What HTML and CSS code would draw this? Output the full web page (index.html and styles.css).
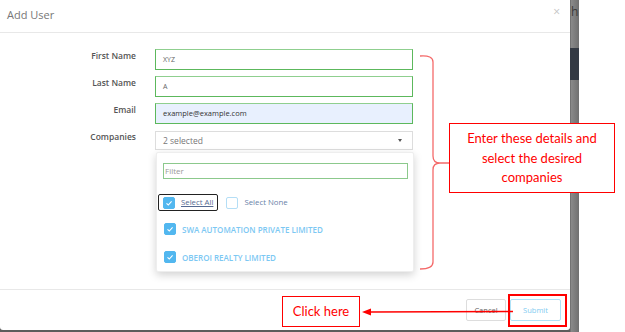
FILE: index.html
```html
<!DOCTYPE html>
<html>
<head>
    <meta charset="UTF-8">
    <title>Add User</title>
    <link rel="stylesheet" href="styles.css">
</head>
<body>
    <div class="page">
        <div class="backdrop">
            <div class="strip-text">h</div>
            <div class="strip-block"></div>
            <div class="modal">
                <div class="modal-header">
                    <span class="modal-title">Add User</span>
                    <span class="close">&times;</span>
                </div>
                <div class="modal-body">
                    <form class="user-form">
                        <label>First Name</label>
                        <div class="field valid">XYZ</div>
                        <label>Last Name</label>
                        <div class="field valid">A</div>
                        <label>Email</label>
                        <div class="field valid autofill">example@example.com</div>
                        <label>Companies</label>
                        <div class="select">
                            <span>2 selected</span>
                            <span class="caret"></span>
                            <div class="dropdown">
                                <div class="filter">Filter</div>
                                <div class="bulk">
                                    <div class="opt focused">
                                        <span class="check on"><svg viewBox="0 0 12 12" width="12" height="12"><polyline points="3.5,6.3 5.3,8 8.6,4.3" fill="none" stroke="#fff" stroke-width="1.1"/></svg></span>
                                        <u>Select All</u>
                                    </div>
                                    <div class="opt">
                                        <span class="check"></span>
                                        <span>Select None</span>
                                    </div>
                                </div>
                                <div class="company">
                                    <span class="check on"><svg viewBox="0 0 12 12" width="12" height="12"><polyline points="3.5,6.3 5.3,8 8.6,4.3" fill="none" stroke="#fff" stroke-width="1.1"/></svg></span>
                                    SWA AUTOMATION PRIVATE LIMITED
                                </div>
                                <div class="company">
                                    <span class="check on"><svg viewBox="0 0 12 12" width="12" height="12"><polyline points="3.5,6.3 5.3,8 8.6,4.3" fill="none" stroke="#fff" stroke-width="1.1"/></svg></span>
                                    OBEROI REALTY LIMITED
                                </div>
                            </div>
                        </div>
                    </form>
                </div>
                <div class="modal-footer">
                    <button class="btn cancel">Cancel</button>
                    <button class="btn submit">Submit</button>
                </div>
            </div>
        </div>
        <div class="right-side"></div>
    </div>

    <!-- annotations drawn over the screenshot -->
    <svg class="brace" width="36" height="224" viewBox="0 0 36 224">
        <path d="M2,4 Q15,3 15,10 L15,104 Q15,111 22,111 L33,111 M22,111 Q15,111 15,118 L15,210 Q15,217 2,217" fill="none" stroke="#f46a6a" stroke-width="1.3"/>
    </svg>
    <div class="note note-details">Enter these details and<br>select the desired<br>companies</div>
    <div class="note note-click">Click here</div>
    <svg class="arrow" width="152" height="12" viewBox="0 0 152 12">
        <line x1="9" y1="6" x2="152" y2="5.5" stroke="#f00" stroke-width="1.6"/>
        <polygon points="1,6 10,2.5 10,9.5" fill="#f00"/>
    </svg>
    <div class="highlight"></div>
</body>
</html>
```

FILE: styles.css
```css
body {
    margin: 0;
    padding: 0;
    width: 625px;
    height: 332px;
    overflow: hidden;
    background-color: #fff;
    font-family: "Open Sans", Arial, sans-serif;
    position: relative;
}

.page {
    display: flex;
    height: 332px;
}

.backdrop {
    width: 579px;
    position: relative;
    background: linear-gradient(90deg, #5c5c5c 0, #5c5c5c 570px, #8a8a8a 571px, #707070 579px);
}

.right-side {
    flex: 1;
    background-color: #fff;
}

.strip-text {
    position: absolute;
    left: 571px;
    top: 3px;
    font-size: 12px;
    color: #3a3a3a;
}

.strip-block {
    position: absolute;
    left: 570px;
    top: 48px;
    width: 9px;
    height: 32px;
    background-color: #343a44;
}

.modal {
    width: 570px;
    height: 330px;
    background-color: #fff;
    border-radius: 0 0 3px 3px;
    display: flex;
    flex-direction: column;
    box-sizing: border-box;
}

.modal-header {
    height: 32px;
    border-bottom: 1px solid #e8e8e8;
    display: flex;
    align-items: center;
    justify-content: space-between;
    padding: 0 10px 0 7px;
    flex-shrink: 0;
}

.modal-title {
    font-size: 11px;
    color: #777;
    margin-top: -3px;
}

.close {
    font-size: 12px;
    color: #c4c4c4;
    margin-top: -9px;
}

.modal-body {
    flex: 1;
    position: relative;
    padding-top: 16px;
}

.user-form {
    display: grid;
    grid-template-columns: 136px 258px;
    column-gap: 19px;
    row-gap: 6px;
    align-items: start;
}

.user-form label {
    text-align: right;
    font-size: 8.5px;
    font-weight: 600;
    color: #555;
    padding-top: 1px;
}

.field {
    height: 21px;
    box-sizing: border-box;
    border: 1px solid #5cb85c;
    border-top-color: #8fcf8f;
    padding: 0 7px;
    font-size: 7px;
    line-height: 19px;
    color: #666;
}

.field.autofill {
    background-color: #e8f0fe;
    color: #333;
    font-size: 7.5px;
}

.select {
    position: relative;
    height: 19px;
    margin-top: 1px;
    box-sizing: border-box;
    border: 1px solid #ddd;
    padding: 0 7px;
    font-size: 8.5px;
    line-height: 17px;
    color: #777;
    display: flex;
    justify-content: space-between;
    align-items: center;
}

.caret {
    width: 0;
    height: 0;
    border-left: 2.5px solid transparent;
    border-right: 2.5px solid transparent;
    border-top: 3px solid #555;
    margin-right: 3px;
}

.dropdown {
    position: absolute;
    left: 0;
    top: 20px;
    width: 258px;
    height: 120px;
    box-sizing: border-box;
    background-color: #fff;
    border: 1px solid #eee;
    border-radius: 2px;
    box-shadow: 0 3px 8px rgba(0, 0, 0, 0.18);
    padding: 10px 5px 0 1px;
}

.filter {
    height: 16px;
    margin-left: 5px;
    box-sizing: border-box;
    border: 1px solid #8cc98c;
    font-size: 8px;
    line-height: 14px;
    padding-left: 1px;
    color: #999;
}

.bulk {
    display: flex;
    gap: 3px;
    margin-top: 15px;
    align-items: center;
}

.opt {
    display: flex;
    align-items: center;
    gap: 6px;
    height: 17px;
    padding: 0 4px;
    box-sizing: border-box;
    font-size: 7.8px;
    color: #6a7fa8;
    border: 1px solid transparent;
}

.opt.focused {
    border: 1.5px solid #222;
    border-radius: 2px;
}

.opt u {
    color: #556a92;
}

.check {
    width: 12px;
    height: 12px;
    box-sizing: border-box;
    border: 1px solid #b4def6;
    border-radius: 2px;
    display: inline-block;
    flex-shrink: 0;
}

.check.on {
    background-color: #52b7ef;
    border-color: #52b7ef;
}

.check svg {
    display: block;
    margin: -1px;
}

.company {
    display: flex;
    align-items: center;
    gap: 6px;
    height: 12px;
    margin-left: 6px;
    margin-top: 12px;
    font-size: 8px;
    font-weight: 600;
    color: #7cc8f3;
}

.company + .company {
    margin-top: 16px;
}

.modal-footer {
    height: 41px;
    box-sizing: border-box;
    border-top: 1px solid #e8e8e8;
    display: flex;
    justify-content: flex-end;
    align-items: flex-start;
    gap: 4px;
    padding: 9px 9px 0 0;
    flex-shrink: 0;
}

.btn {
    height: 22px;
    background-color: #fff;
    border-radius: 2px;
    font-family: "Open Sans", Arial, sans-serif;
    font-size: 7.5px;
    padding: 0;
}

.btn.cancel {
    width: 40px;
    border: 1px solid #ddd;
    color: #666;
}

.btn.submit {
    width: 51px;
    border: 1px solid #aee2f8;
    color: #7fcbf1;
}

.brace {
    position: absolute;
    left: 418px;
    top: 52px;
}

.note {
    position: absolute;
    box-sizing: border-box;
    border: 1px solid #f00;
    background-color: #fff;
    color: #f00;
    font-family: Lato, "Open Sans", sans-serif;
    font-size: 13px;
    text-align: center;
}

.note-details {
    left: 449px;
    top: 123px;
    width: 166px;
    height: 70px;
    line-height: 19.5px;
    padding-top: 5px;
}

.note-click {
    left: 282px;
    top: 296px;
    width: 78px;
    height: 31px;
    line-height: 29px;
}

.arrow {
    position: absolute;
    left: 361px;
    top: 306px;
}

.highlight {
    position: absolute;
    left: 508px;
    top: 294px;
    width: 59px;
    height: 33px;
    box-sizing: border-box;
    border: 2px solid #f00;
}
```
